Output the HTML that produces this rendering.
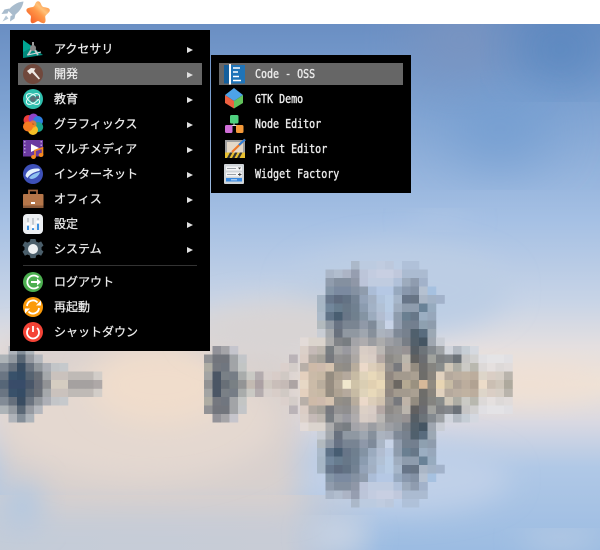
<!DOCTYPE html>
<html lang="ja"><head><meta charset="utf-8"><style>
html,body{margin:0;padding:0;width:600px;height:550px;overflow:hidden;background:#9cb8dc}
svg{position:absolute;left:0;top:0}
#mos rect{width:1.03px;height:1.03px}
.bar{position:absolute;left:0;top:0;width:600px;height:24px;background:#fff}
.menu{position:absolute;background:#000}
.hl{position:absolute;background:#666;width:184px;height:22px}
.t{position:absolute;white-space:nowrap;color:#ececec;line-height:16px}
.j{font:12px/16px "WenQuanYi Zen Hei","Noto Sans CJK JP",sans-serif;left:54px;-webkit-text-stroke:.25px #ececec}
.m{font:12px/16px "DejaVu Sans Mono","Liberation Mono",monospace;left:255px;transform:scaleX(.833);transform-origin:0 0;-webkit-text-stroke:.35px #ececec}
.a{position:absolute;left:187px;width:0;height:0;border-left:6px solid #e0e0e0;border-top:3px solid transparent;border-bottom:3px solid transparent}
.sep{position:absolute;left:23px;top:265px;width:174px;height:1px;background:#333}
</style></head><body>
<svg width="600" height="550" viewBox="0 0 600 550">
<defs>
<linearGradient id="sky" x1="0" y1="0" x2="0" y2="1">
<stop offset="0" stop-color="#6489bf"/><stop offset=".2" stop-color="#7fa3d2"/><stop offset=".4" stop-color="#a5c0e4"/><stop offset=".55" stop-color="#c8d4e6"/><stop offset=".63" stop-color="#e4dfe0"/><stop offset=".7" stop-color="#efe2d6"/><stop offset=".77" stop-color="#d8d8e2"/><stop offset=".85" stop-color="#b0c8e6"/><stop offset="1" stop-color="#9cbce2"/>
</linearGradient>
<linearGradient id="bl" x1="0" y1="0" x2="1" y2="0"><stop offset="0" stop-color="#c4ccd8"/><stop offset=".75" stop-color="#c8ccd6"/><stop offset="1" stop-color="#c8ccd6" stop-opacity="0"/></linearGradient>
<filter id="b30" x="-50%" y="-50%" width="200%" height="200%"><feGaussianBlur stdDeviation="30"/></filter>
<filter id="b14" x="-50%" y="-50%" width="200%" height="200%"><feGaussianBlur stdDeviation="14"/></filter>
<filter id="px" x="-5%" y="-5%" width="110%" height="110%"><feGaussianBlur stdDeviation=".09"/></filter>
<linearGradient id="st" x1="0" y1="1" x2="1" y2="0"><stop offset="0" stop-color="#f4511e"/><stop offset=".5" stop-color="#ff9a4a"/><stop offset=".65" stop-color="#ffc27a"/><stop offset="1" stop-color="#fb7a28"/></linearGradient>
</defs>
<rect width="600" height="550" fill="url(#sky)"/>
<ellipse cx="460" cy="40" rx="50" ry="40" fill="#7c94c0" filter="url(#b30)"/>
<ellipse cx="560" cy="50" rx="40" ry="26" fill="#4e7fba" filter="url(#b30)"/>
<ellipse cx="500" cy="130" rx="50" ry="30" fill="#6f9bd0" filter="url(#b30)"/>
<ellipse cx="400" cy="290" rx="110" ry="45" fill="#bccde4" filter="url(#b14)"/>
<ellipse cx="400" cy="478" rx="110" ry="35" fill="#c0d0e8" filter="url(#b14)"/>
<rect x="0" y="495" width="380" height="55" fill="url(#bl)"/>
<rect x="0" y="340" width="300" height="170" fill="#d8d0ce" filter="url(#b14)"/>
<ellipse cx="140" cy="420" rx="140" ry="60" fill="#e4d8d0" filter="url(#b14)"/>
<ellipse cx="160" cy="385" rx="70" ry="40" fill="#f0ddcc" filter="url(#b14)"/>
<ellipse cx="22" cy="505" rx="22" ry="25" fill="#b4c8e0" filter="url(#b14)"/>
<ellipse cx="290" cy="330" rx="100" ry="30" fill="#d8d4d4" filter="url(#b14)"/>
<ellipse cx="530" cy="384" rx="70" ry="18" fill="#efe0d4" filter="url(#b14)"/>
<ellipse cx="340" cy="535" rx="30" ry="10" fill="#d4dce8" filter="url(#b14)"/>
<ellipse cx="560" cy="540" rx="40" ry="6" fill="#c8d4e4" filter="url(#b14)"/>
<ellipse cx="440" cy="220" rx="30" ry="6" fill="#b4c8e4" filter="url(#b14)"/>
<g id="mos" filter="url(#px)" opacity=".92">
<g transform="translate(300 261) scale(8.5)">
<g id="ra">
<g transform="translate(0 0)"><rect x="6" fill="#a9b6c7"/><rect x="7" fill="#bccbe0"/><rect x="8" fill="#bccbe0"/><rect x="9" fill="#c0cce0"/><rect x="10" fill="#bcc8dc"/><rect x="12" fill="#afc0d8"/><rect x="13" fill="#afc0d8"/></g>
<g transform="translate(0 1)"><rect x="3" fill="#a8b4c6"/><rect x="4" fill="#b0bccc"/><rect x="5" fill="#aab2c2"/><rect x="6" fill="#929aac"/><rect x="7" fill="#bcc5d8"/><rect x="8" fill="#c4cce0"/><rect x="9" fill="#c9d0e2"/><rect x="10" fill="#c9d0e2"/><rect x="11" fill="#c0c8dc"/><rect x="12" fill="#a9bad0"/><rect x="13" fill="#a9bad0"/><rect x="14" fill="#a9bad0"/></g>
<g transform="translate(0 2)"><rect x="3" fill="#8c98a8"/><rect x="4" fill="#7f8b9a"/><rect x="5" fill="#7f8b9a"/><rect x="6" fill="#8b93a2"/><rect x="7" fill="#bcc4d8"/><rect x="8" fill="#c0cce0"/><rect x="9" fill="#c0cce0"/><rect x="10" fill="#c0cce0"/><rect x="11" fill="#b0c0d8"/><rect x="12" fill="#9aa8ba"/><rect x="13" fill="#8b98aa"/><rect x="14" fill="#a0b0c8"/></g>
<g transform="translate(0 3)"><rect x="3" fill="#7f90a2"/><rect x="4" fill="#74849a"/><rect x="5" fill="#74849a"/><rect x="6" fill="#7f8c9c"/><rect x="7" fill="#8b98a8"/><rect x="8" fill="#a9bcd6"/><rect x="9" fill="#b4c8e4"/><rect x="10" fill="#b4c8e4"/><rect x="11" fill="#94a6bc"/><rect x="12" fill="#8494a8"/><rect x="13" fill="#7e8c9f"/><rect x="14" fill="#b4c0d0"/><rect x="15" fill="#a4c0e0"/></g>
<g transform="translate(0 4)"><rect x="2" fill="#a4b4c4"/><rect x="3" fill="#5f7084"/><rect x="4" fill="#566476"/><rect x="5" fill="#5a6a7c"/><rect x="6" fill="#6c7c8c"/><rect x="7" fill="#90a0b4"/><rect x="8" fill="#a0aec0"/><rect x="9" fill="#b0c4dc"/><rect x="10" fill="#b8cce4"/><rect x="11" fill="#a4b4c8"/><rect x="12" fill="#5e6e80"/><rect x="13" fill="#5e6c7c"/><rect x="14" fill="#a8b4c4"/><rect x="15" fill="#a0b0c4"/><rect x="16" fill="#a0b0c8"/></g>
<g transform="translate(0 5)"><rect x="2" fill="#a4b4c4"/><rect x="3" fill="#6b8096"/><rect x="4" fill="#5f7488"/><rect x="5" fill="#5f7080"/><rect x="6" fill="#687a8a"/><rect x="7" fill="#8698ac"/><rect x="8" fill="#a0b0c4"/><rect x="9" fill="#b0c0d4"/><rect x="10" fill="#b8cce4"/><rect x="11" fill="#9caabc"/><rect x="12" fill="#8a98a8"/><rect x="13" fill="#8a98a8"/><rect x="14" fill="#627c90"/><rect x="15" fill="#94a8bc"/></g>
<g transform="translate(0 6)"><rect x="2" fill="#a8b8c8"/><rect x="3" fill="#566a80"/><rect x="4" fill="#3e5268"/><rect x="5" fill="#5e6e80"/><rect x="6" fill="#687888"/><rect x="7" fill="#7e8e9e"/><rect x="8" fill="#98a8bc"/><rect x="9" fill="#b0bcd0"/><rect x="10" fill="#b8c8e0"/><rect x="11" fill="#8a98a8"/><rect x="12" fill="#64788a"/><rect x="13" fill="#5e7080"/><rect x="14" fill="#98acbf"/><rect x="15" fill="#94a4b8"/></g>
<g transform="translate(0 7)"><rect x="2" fill="#b0b8bc"/><rect x="3" fill="#8a94a0"/><rect x="4" fill="#5e6a7c"/><rect x="5" fill="#727e8c"/><rect x="6" fill="#727e8c"/><rect x="7" fill="#8a94a4"/><rect x="8" fill="#788494"/><rect x="9" fill="#a8b4c4"/><rect x="10" fill="#c8d4e8"/><rect x="11" fill="#8c98a8"/><rect x="12" fill="#6c7a88"/><rect x="13" fill="#6c7888"/><rect x="14" fill="#8a9cac"/><rect x="15" fill="#8a98a8"/></g>
<g transform="translate(0 8)"><rect x="2" fill="#c8ccd4"/><rect x="3" fill="#a0a4a8"/><rect x="4" fill="#5e6874"/><rect x="5" fill="#8a929c"/><rect x="6" fill="#8a929c"/><rect x="7" fill="#9aa2ac"/><rect x="8" fill="#808a96"/><rect x="9" fill="#a8b0bc"/><rect x="10" fill="#a4aab8"/><rect x="11" fill="#788290"/><rect x="12" fill="#707a86"/><rect x="13" fill="#445464"/><rect x="14" fill="#506474"/><rect x="15" fill="#98a4b0"/></g>
<g transform="translate(0 9)"><rect x="0" fill="#e4dcd8"/><rect x="1" fill="#dcd4cc"/><rect x="2" fill="#dcd4cc"/><rect x="3" fill="#a8a8a8"/><rect x="4" fill="#787c80"/><rect x="5" fill="#70747a"/><rect x="6" fill="#a0a0a4"/><rect x="7" fill="#aaa8aa"/><rect x="8" fill="#96989c"/><rect x="9" fill="#a8a8a8"/><rect x="10" fill="#989a9e"/><rect x="11" fill="#8c9096"/><rect x="12" fill="#70767e"/><rect x="13" fill="#465460"/><rect x="14" fill="#384a58"/><rect x="15" fill="#9aa2ac"/><rect x="16" fill="#c8ccd4"/></g>
<g transform="translate(0 10)"><rect x="0" fill="#dccfc8"/><rect x="1" fill="#c4b8b4"/><rect x="2" fill="#bcb4ac"/><rect x="3" fill="#70747a"/><rect x="4" fill="#a0a0a0"/><rect x="5" fill="#94949a"/><rect x="6" fill="#aca8a8"/><rect x="7" fill="#d8ccc4"/><rect x="8" fill="#d4c8c0"/><rect x="9" fill="#b8b4b0"/><rect x="10" fill="#8c8c8c"/><rect x="11" fill="#909090"/><rect x="12" fill="#908c8c"/><rect x="13" fill="#4c525a"/><rect x="14" fill="#646a70"/><rect x="15" fill="#7c8288"/><rect x="16" fill="#989ca0"/><rect x="17" fill="#d0d4dc"/><rect x="18" fill="#b0b8c0"/><rect x="19" fill="#c4ccd4"/><rect x="20" fill="#d4d8e0"/></g>
<g transform="translate(0 11)"><rect x="0" fill="#dcccc4"/><rect x="1" fill="#aca49c"/><rect x="2" fill="#a09c94"/><rect x="3" fill="#6c7074"/><rect x="4" fill="#8c8c8c"/><rect x="5" fill="#888888"/><rect x="6" fill="#a8a4a0"/><rect x="7" fill="#dcd0c4"/><rect x="8" fill="#d8ccc4"/><rect x="9" fill="#b0a4a0"/><rect x="10" fill="#84827f"/><rect x="11" fill="#908e8a"/><rect x="12" fill="#b8b2a8"/><rect x="13" fill="#545454"/><rect x="14" fill="#606468"/><rect x="15" fill="#9a9c98"/><rect x="16" fill="#74787c"/><rect x="17" fill="#7c8084"/><rect x="18" fill="#606870"/><rect x="19" fill="#c4c4c4"/><rect x="20" fill="#d0d0d0"/><rect x="21" fill="#e0e0e4"/><rect x="22" fill="#e4e4e8"/><rect x="23" fill="#e4e4e8"/><rect x="24" fill="#e0e0e4"/></g>
<g transform="translate(0 12)"><rect x="0" fill="#b4aca4"/><rect x="1" fill="#ccb8a4"/><rect x="2" fill="#ccb8a8"/><rect x="3" fill="#d4c0ac"/><rect x="4" fill="#8c8880"/><rect x="5" fill="#888480"/><rect x="6" fill="#b4a898"/><rect x="7" fill="#ecd8c8"/><rect x="8" fill="#dcccb8"/><rect x="9" fill="#d0c0ac"/><rect x="10" fill="#908c88"/><rect x="11" fill="#6e7074"/><rect x="12" fill="#bcb0a4"/><rect x="13" fill="#8c8478"/><rect x="14" fill="#646464"/><rect x="15" fill="#7c7c78"/><rect x="16" fill="#808484"/><rect x="17" fill="#ccc4b4"/><rect x="18" fill="#a8a8a0"/><rect x="19" fill="#c8c8c4"/><rect x="20" fill="#b4b4ac"/><rect x="21" fill="#dcd8d8"/><rect x="22" fill="#e4e0e0"/><rect x="23" fill="#dcd8d8"/><rect x="24" fill="#e0dcdc"/></g>
<g transform="translate(0 13)"><rect x="0" fill="#e4d0bc"/><rect x="1" fill="#c8b8a4"/><rect x="2" fill="#c4b4a0"/><rect x="3" fill="#8c8478"/><rect x="4" fill="#a89c8c"/><rect x="5" fill="#b0a498"/><rect x="6" fill="#c4b8a0"/><rect x="7" fill="#ded2b8"/><rect x="8" fill="#e8d8b8"/><rect x="9" fill="#dcccb0"/><rect x="10" fill="#887f78"/><rect x="11" fill="#9c9488"/><rect x="12" fill="#9c9488"/><rect x="13" fill="#a49a8c"/><rect x="14" fill="#646460"/><rect x="15" fill="#807c74"/><rect x="16" fill="#e0d0bc"/><rect x="17" fill="#b0a498"/><rect x="18" fill="#b8aa9c"/><rect x="19" fill="#bcae9c"/><rect x="20" fill="#b8a898"/><rect x="21" fill="#dcd4c8"/><rect x="22" fill="#d8ccc4"/><rect x="23" fill="#d4ccc4"/><rect x="24" fill="#b4b0a8"/></g>
</g>
<use href="#ra" transform="translate(0 29) scale(1 -1)"/>
<g transform="translate(0 14)"><rect x="0" fill="#e8d8c4"/><rect x="1" fill="#c8b8a4"/><rect x="2" fill="#b4a898"/><rect x="3" fill="#8e8478"/><rect x="4" fill="#b0a494"/><rect x="5" fill="#f0e8cc"/><rect x="6" fill="#ccc0a4"/><rect x="7" fill="#d8ccb0"/><rect x="8" fill="#e0ceae"/><rect x="9" fill="#ead8b4"/><rect x="10" fill="#8e8478"/><rect x="11" fill="#605c58"/><rect x="12" fill="#b0a48c"/><rect x="13" fill="#928a78"/><rect x="14" fill="#d4b494"/><rect x="15" fill="#888278"/><rect x="16" fill="#e8d4b0"/><rect x="17" fill="#c4b8a0"/><rect x="18" fill="#a89c90"/><rect x="19" fill="#b8a898"/><rect x="20" fill="#ac9c8c"/><rect x="21" fill="#ecdcc8"/><rect x="22" fill="#c8bcb0"/><rect x="23" fill="#ccc4b8"/><rect x="24" fill="#a8a498"/></g>
</g>
<g transform="translate(0 261) scale(8.5)">
<g id="la">
<g transform="translate(0 10)"><rect x="1" fill="#aab0b8"/><rect x="2" fill="#7c8894"/><rect x="3" fill="#a8b0b8"/><rect x="25" fill="#8c8c94"/><rect x="26" fill="#a0a0a4"/><rect x="27" fill="#c4c4cc"/></g>
<g transform="translate(0 11)"><rect x="0" fill="#a8b0b4"/><rect x="1" fill="#8c949c"/><rect x="2" fill="#4e5c6c"/><rect x="3" fill="#8e949c"/><rect x="4" fill="#b0b4bc"/><rect x="24" fill="#8a8c90"/><rect x="25" fill="#686c74"/><rect x="26" fill="#686c74"/><rect x="27" fill="#9ca0a4"/><rect x="28" fill="#c0c4c8"/><rect x="34" fill="#b8b0b4"/></g>
<g transform="translate(0 12)"><rect x="0" fill="#7a8490"/><rect x="1" fill="#5a6674"/><rect x="2" fill="#2c3f58"/><rect x="3" fill="#5e6a78"/><rect x="4" fill="#8a9098"/><rect x="5" fill="#a8acb4"/><rect x="6" fill="#c0c4c8"/><rect x="7" fill="#c4c8cc"/><rect x="24" fill="#a8a8a0"/><rect x="25" fill="#6a7078"/><rect x="26" fill="#666e78"/><rect x="27" fill="#9ca0a4"/><rect x="28" fill="#c0c4c4"/><rect x="33" fill="#dcd0cc"/><rect x="34" fill="#d4ccc8"/></g>
<g transform="translate(0 13)"><rect x="0" fill="#5e6c7c"/><rect x="1" fill="#2c4462"/><rect x="2" fill="#26405c"/><rect x="3" fill="#4a5868"/><rect x="4" fill="#5e6670"/><rect x="5" fill="#a0a4a8"/><rect x="6" fill="#c8c0bc"/><rect x="7" fill="#c8c0bc"/><rect x="8" fill="#bcb8b4"/><rect x="9" fill="#bcb8b4"/><rect x="10" fill="#bcb8b4"/><rect x="11" fill="#d0ccc8"/><rect x="24" fill="#9ca0a0"/><rect x="25" fill="#3e4c5c"/><rect x="26" fill="#707880"/><rect x="27" fill="#6c7480"/><rect x="28" fill="#a4a8a8"/><rect x="29" fill="#c8c8c4"/><rect x="30" fill="#b0a8ac"/><rect x="31" fill="#d8d0cc"/><rect x="32" fill="#d8ccc8"/><rect x="33" fill="#d0c8c4"/></g>
</g>
<use href="#la" transform="translate(0 29) scale(1 -1)"/>
<g transform="translate(0 14)"><rect x="0" fill="#4a5c70"/><rect x="1" fill="#2a4060"/><rect x="2" fill="#2a4060"/><rect x="3" fill="#3a4c60"/><rect x="4" fill="#5c6470"/><rect x="5" fill="#8a8c90"/><rect x="6" fill="#d4ccc0"/><rect x="7" fill="#d4ccc0"/><rect x="8" fill="#a09c9c"/><rect x="9" fill="#a09c9c"/><rect x="10" fill="#a09c9c"/><rect x="11" fill="#a8a4a4"/><rect x="24" fill="#8a8c8e"/><rect x="25" fill="#3e4c5c"/><rect x="26" fill="#5c6670"/><rect x="27" fill="#70787e"/><rect x="28" fill="#8c8e90"/><rect x="29" fill="#c0b8b0"/><rect x="30" fill="#a89ca0"/><rect x="31" fill="#d0c8c0"/><rect x="32" fill="#c8bcb8"/><rect x="33" fill="#c4b8b4"/><rect x="34" fill="#a8a0a0"/></g>
</g>
</g>
</svg>

<div class="bar"></div>
<div class="menu" style="left:10px;top:30px;width:200px;height:321px"></div>
<div class="menu" style="left:211px;top:55px;width:200px;height:138px"></div>
<div class="hl" style="left:18px;top:63px"></div>
<div class="hl" style="left:219px;top:63px"></div>
<div class="sep"></div>

<div class="t j" style="top:41px">アクセサリ</div><div class="a" style="top:47px"></div>
<div class="t j" style="top:66px">開発</div><div class="a" style="top:72px"></div>
<div class="t j" style="top:91px">教育</div><div class="a" style="top:97px"></div>
<div class="t j" style="top:116px">グラフィックス</div><div class="a" style="top:122px"></div>
<div class="t j" style="top:141px">マルチメディア</div><div class="a" style="top:147px"></div>
<div class="t j" style="top:166px">インターネット</div><div class="a" style="top:172px"></div>
<div class="t j" style="top:191px">オフィス</div><div class="a" style="top:197px"></div>
<div class="t j" style="top:216px">設定</div><div class="a" style="top:222px"></div>
<div class="t j" style="top:241px">システム</div><div class="a" style="top:247px"></div>
<div class="t j" style="top:274px">ログアウト</div>
<div class="t j" style="top:299px">再起動</div>
<div class="t j" style="top:324px">シャットダウン</div>

<div class="t m" style="top:66px">Code - OSS</div>
<div class="t m" style="top:91px">GTK Demo</div>
<div class="t m" style="top:116px">Node Editor</div>
<div class="t m" style="top:141px">Print Editor</div>
<div class="t m" style="top:166px">Widget Factory</div>

<svg width="600" height="550" viewBox="0 0 600 550">
<!-- rocket -->
<path d="M23.500 1.500C17 2 12 5.500 8 10.500L13.500 16C18.500 12.500 22.500 8 23.500 1.500Z" fill="#a9bccd"/>
<path d="M9.500 8.500 4.500 9.500 1.500 14 7.500 13.500ZM15.500 14 14.500 18.500 10 21.500 10.500 16Z" fill="#a9bccd"/>
<path d="M6 15.500 2.500 21.500 8.500 18.500Z" fill="#b8c8d6"/>
<!-- star -->
<path d="M38 1.200c1.700 0 2.500 1.400 3.400 3.700.5 1.300 1.200 2 2.600 2.200 3 .5 5.600.9 5.800 2.900.2 1.800-1.900 3.400-3.500 4.900-1 .9-1.200 1.600-1 2.900.4 2.600.5 4.600-1.100 5.300-1.600.6-3.500-.7-5.300-1.800-.7-.3-1.200-.3-1.800 0-1.900 1.100-3.600 2.400-5.200 1.800-1.600-.7-1.400-2.900-1-5.300.2-1.300 0-2-1-2.900-1.600-1.500-3.700-3.100-3.500-4.900.2-2 2.900-2.400 5.800-2.900 1.400-.2 2-.9 2.600-2.200.8-2.300 1.600-3.700 3.200-3.700Z" fill="url(#st)"/>

<!-- accessories -->
<path d="M23 40 43 55 23 58Z" fill="#00897b"/>
<path d="M23 40 33 47 23 52Z" fill="#00a594"/>
<path d="M33 42v5" stroke="#9e9e9e" stroke-width="2"/>
<path d="M33 47 28 55M33 47 38 55" stroke="#c4c4c4" stroke-width="1.800" fill="none"/>
<circle cx="33" cy="48" r="3" fill="#8a8a8a"/>
<path d="M27 55 Q33 54 41 52" stroke="#cfd8dc" stroke-width="1" fill="none"/>
<!-- hammer -->
<circle cx="33" cy="74" r="10" fill="#70483c"/>
<path d="M27 71 31 68 35.500 68.500 34 71 40 78.500 38.800 79.500 32 72.500 30 74.500Z" fill="#eee8e4"/>
<!-- education -->
<circle cx="33" cy="99" r="10" fill="#2fbfae"/>
<circle cx="33" cy="99" r="3" fill="#5a7078"/>
<ellipse cx="33" cy="99" rx="7.500" ry="4" fill="none" stroke="#eafaf8" stroke-width="1" transform="rotate(-35 33 99)"/>
<ellipse cx="33" cy="99" rx="7.500" ry="4" fill="none" stroke="#eafaf8" stroke-width="1" transform="rotate(35 33 99)"/>
<rect x="36" y="96" width="3" height="3" fill="#5a7078"/>
<!-- graphics -->
<circle cx="28.500" cy="120" r="5" fill="#ef3f3a"/>
<circle cx="33.500" cy="118.500" r="5" fill="#8e44c8"/>
<circle cx="38" cy="121" r="5" fill="#2f7fe0"/>
<circle cx="38.200" cy="127" r="5" fill="#1ba38a"/>
<circle cx="33" cy="130" r="5" fill="#f5c026"/>
<circle cx="28" cy="126.500" r="5" fill="#f57c22"/>
<circle cx="33" cy="124" r="3.600" fill="#f57c22" opacity=".8"/>
<!-- multimedia -->
<rect x="23" y="140" width="20" height="16.500" fill="#6b3aa0"/>
<path d="M24 141h1.500v1.500H24zM24 144.500h1.500V146H24zM24 148h1.500v1.500H24zM24 151.500h1.500V153H24zM40.500 141H42v1.500h-1.500zM40.500 144.500H42V146h-1.500z" fill="#b89ad8"/>
<path d="M31 144 39 148 31 152Z" fill="#fff"/>
<path d="M35 157V150.500L42.500 148V155" stroke="#f58a1f" stroke-width="1.600" fill="none"/>
<ellipse cx="33.500" cy="157" rx="2.400" ry="2" fill="#f58a1f"/>
<ellipse cx="41" cy="155" rx="2.400" ry="2" fill="#f58a1f"/>
<!-- internet -->
<circle cx="33" cy="174" r="10" fill="#3d50b8"/>
<path d="M25.500 176C26 171 31 168 38 168.500 40 168.700 40.500 170 39 171 34 172 30 174 27.500 178Z" fill="#e4f2fc"/>
<path d="M29 178C31 175 35 173 40 172 39 176 35 179 31 179Z" fill="#8fc3f0"/>
<!-- office -->
<path d="M29 194v-3.500h8V194" stroke="#a5673f" stroke-width="1.800" fill="none"/>
<rect x="23" y="194" width="20.500" height="14" rx="1" fill="#b5764a"/>
<rect x="23" y="205.500" width="20.500" height="2.500" fill="#8a5a3a"/>
<rect x="31" y="202" width="4" height="2" fill="#fff"/>
<!-- settings -->
<rect x="23" y="214" width="20" height="20" rx="4" fill="#eceff2"/>
<path d="M28 218v12M33 218v12M38 218v12" stroke="#b8bfc6" stroke-width="1.500"/>
<path d="M28 224v6M33 226v4M38 222v8" stroke="#2f8ae0" stroke-width="1.800"/>
<circle cx="28" cy="224" r="1.700" fill="#fff"/><circle cx="33" cy="226.500" r="1.700" fill="#fff"/><circle cx="38" cy="222" r="1.700" fill="#fff"/>
<!-- system -->
<path d="M30.500 239h5l.7 2.600 2.500 1 2.400-1.200 2.400 4.100-2 1.800v2.500l2 1.800-2.400 4.100-2.400-1.200-2.500 1-.7 2.600h-5l-.7-2.600-2.500-1-2.400 1.200-2.400-4.100 2-1.800v-2.500l-2-1.800 2.400-4.100 2.400 1.200 2.500-1Z" fill="#4a5e6a"/>
<circle cx="33" cy="249" r="5" fill="#eef1f3"/>
<!-- logout -->
<circle cx="33" cy="282" r="10" fill="#4caf50"/>
<path d="M38.500 277.500A6.500 6.500 0 1 0 38.500 286.500" stroke="#fff" stroke-width="1.800" fill="none"/>
<path d="M31 282h7" stroke="#fff" stroke-width="2"/>
<path d="M37 278.500 41 282 37 285.500Z" fill="#fff"/>
<!-- restart -->
<circle cx="33" cy="307" r="10" fill="#fb9a0a"/>
<path d="M27 306A6 6 0 0 1 37.500 302.500" stroke="#fff" stroke-width="1.800" fill="none"/>
<path d="M39 308A6 6 0 0 1 28.500 311.500" stroke="#fff" stroke-width="1.800" fill="none"/>
<path d="M36 305.500H41V300.500ZM30 308.500H25V313.500Z" fill="#fff"/>
<!-- shutdown -->
<circle cx="33" cy="332" r="10" fill="#f44336"/>
<path d="M29 328a6 6 0 1 0 8 0" stroke="#fff" stroke-width="1.800" fill="none"/>
<path d="M33 326v6" stroke="#fff" stroke-width="1.800"/>

<!-- code -->
<rect x="224" y="65" width="21" height="18.500" fill="#1f74b8"/>
<rect x="224" y="65" width="5" height="18.500" fill="#155f9c"/>
<rect x="229" y="64" width="2" height="20.500" fill="#fff"/>
<path d="M233 68h7M233 72h5M233 76.500h6M233 80.500h8" stroke="#fff" stroke-width="1.400"/>
<!-- gtk -->
<path d="M234 88 243 95 234 101 225 95Z" fill="#4da3e8"/>
<path d="M225 95 234 101V108.500L225 103Z" fill="#ee6040"/>
<path d="M243 95 234 101V108.500L243 103Z" fill="#62c25c"/>
<!-- node -->
<path d="M234 120v6M229 127V125.500H239V127" stroke="#e0e0e0" stroke-width="1" fill="none"/>
<rect x="230" y="115" width="8.500" height="8.500" rx="1.500" fill="#4fd17f"/>
<rect x="225" y="125" width="7.500" height="8" rx="1.500" fill="#d06fd8"/>
<rect x="236" y="125" width="7.500" height="8" rx="1.500" fill="#f59a3a"/>
<!-- print -->
<rect x="225" y="140" width="20" height="18" fill="#a0a0a0"/>
<rect x="227" y="142" width="16" height="10.500" fill="#e4d8c8"/>
<rect x="225" y="152.500" width="20" height="5.500" fill="#e8c030"/>
<path d="M227 158 230 152.500h2.500L229.500 158ZM232 158 235 152.500h2.500L234.500 158ZM237 158 240 152.500h2.500L239.500 158Z" fill="#333"/>
<path d="M232 152 245 139.500" stroke="#f07a2a" stroke-width="2.200"/>
<path d="M239 145 245 139.500" stroke="#2f7fd8" stroke-width="2.200"/>
<!-- widget -->
<rect x="224" y="164" width="20" height="20" rx="1" fill="#cfd4d8"/>
<rect x="226" y="166.500" width="16" height="4" fill="#f4f5f6"/>
<rect x="226" y="172.500" width="16" height="4" fill="#f4f5f6"/>
<path d="M227 168.500h9M227 174.500h9" stroke="#9aa0a6"/>
<path d="M238 167.500h3l-1.500 2Z" fill="#444"/>
<path d="M238 174.500h3.500M239.800 173v3" stroke="#444"/>
<rect x="226" y="178" width="16" height="3.500" fill="#3a8ae0"/>
<rect x="231" y="179.300" width="6" height="1" fill="#cfe2f8"/>
</svg>
</body></html>
